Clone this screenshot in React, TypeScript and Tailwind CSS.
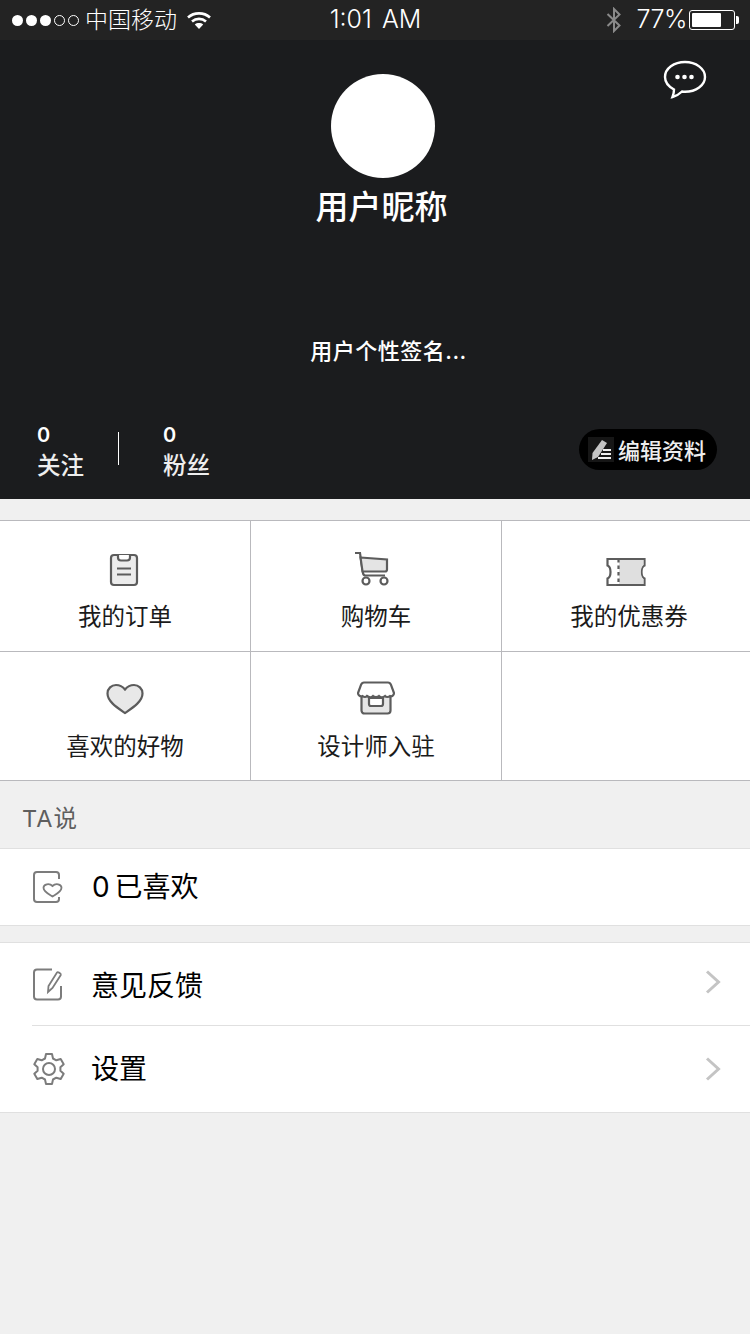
import React from "react";

const CJK = { fontFamily: '"Helvetica Neue", Inter, "Noto Sans CJK SC", sans-serif' };

function Signal() {
  return (
    <div className="flex items-center gap-[3px]">
      {[0, 1, 2].map((i) => (
        <span key={i} className="block w-[11px] h-[11px] rounded-full bg-white" />
      ))}
      {[0, 1].map((i) => (
        <span key={i} className="block w-[11px] h-[11px] rounded-full border border-white" />
      ))}
    </div>
  );
}

function Wifi() {
  return (
    <svg width="26" height="20" viewBox="0 0 26 20" fill="none" stroke="#fff" strokeWidth="2.6">
      <path d="M2 7.5C8 2 18 2 24 7.5" />
      <path d="M6 11.5C10 8 16 8 20 11.5" />
      <path d="M13 19l-4.2-4.6c2.3-1.8 6.1-1.8 8.4 0z" fill="#fff" stroke="none" />
    </svg>
  );
}

function Bluetooth() {
  return (
    <svg width="16" height="26" viewBox="0 0 16 26" fill="none" stroke="#8a8a8a" strokeWidth="2">
      <path d="M1.5 7l12 11.5L8 24V2l5.500 5.500L1.500 19" />
    </svg>
  );
}

function Battery() {
  return (
    <div className="flex items-center gap-[1px] ml-[2px]">
      <div className="w-[46px] h-[20px] rounded-[3px] border border-white p-[2px] flex">
        <div className="w-[29px] bg-white rounded-[1px]" />
      </div>
      <div className="w-[3px] h-[8px] bg-white rounded-r-[2px]" />
    </div>
  );
}

function Clipboard() {
  return (
    <svg className="-ml-[3px]" width="30" height="34" viewBox="0 0 30 34" fill="none" stroke="#5c5c5c" strokeWidth="2.2">
      <rect x="2" y="2" width="26" height="30" rx="3" fill="#ececec" />
      <path d="M9 2v2.500c0 2 1 3 3 3h6c2 0 3-1 3-3V2" fill="#fff" />
      <path d="M8 15.500h14M8 21.500h14" strokeWidth="2.200" />
    </svg>
  );
}

function Cart() {
  return (
    <svg className="-ml-[9px]" width="36" height="36" viewBox="0 0 36 36" fill="none" stroke="#5c5c5c" strokeWidth="2.2">
      <path d="M1 2h5l3 20c.2 1.500 1 2.500 2.500 2.500H31" />
      <path d="M6.500 6.500L33 8.500v10c0 1.300-.8 2-2 2H8.500z" fill="#e4e4e4" />
      <circle cx="12" cy="30" r="3.500" fill="#fff" />
      <circle cx="30" cy="30" r="3.500" fill="#fff" />
    </svg>
  );
}

function Coupon() {
  return (
    <svg width="40" height="30" viewBox="0 0 40 30" fill="none" stroke="#5c5c5c" strokeWidth="2.2">
      <path d="M1.500 2h37v6.500c-4 1.500-4 11.500 0 13V28h-37v-6.500c4-1.500 4-11.500 0-13z" fill="#fff" />
      <path d="M13 3h24.500v5c-3.500 2.500-3.500 11.500 0 14v5H13z" fill="#dfdfdf" stroke="none" />
      <path d="M12.500 2v26" strokeDasharray="3.500 3" />
      <path d="M1.500 2h37M1.500 28h37" />
    </svg>
  );
}

function Heart() {
  return (
    <svg className="-ml-[1px]" width="38" height="32" viewBox="0 0 38 32" fill="#e8e8e8" stroke="#5c5c5c" strokeWidth="2.2">
      <path d="M19 30C11 24.500 1.500 18.500 1.500 10.500 1.500 5.500 5.500 2 10 2c4 0 7 2 9 4.500C21 4 24 2 28 2c4.500 0 8.500 3.500 8.500 8.500C36.500 18.500 27 24.500 19 30z" />
    </svg>
  );
}

function Shop() {
  return (
    <svg width="38" height="34" viewBox="0 0 38 34" fill="none" stroke="#5c5c5c" strokeWidth="2.2">
      <rect x="4.500" y="14" width="29" height="18.500" rx="3" fill="#e6e6e6" />
      <path d="M12 17h14v6c0 1-.7 2-2 2H14c-1.300 0-2-1-2-2z" fill="#fff" />
      <path d="M7 1.500h24c1.500 0 2.500 1 3 2.300L37 12c0 2-2 4-4 3-1.500 1.300-4 1.300-5 0-1.800 1.500-4.500 1.500-6 0-1.500 1.500-4.500 1.500-6 0-1.500 1.500-4 1.500-6 0-1 1.300-3 1.300-4.500 0C3 16 1 14 1 12l3-8.200C4.500 2.500 5.500 1.500 7 1.500z" fill="#fff" />
    </svg>
  );
}

function BookHeart() {
  return (
    <svg width="31" height="34" viewBox="0 0 31 34" fill="none" stroke="#7c7c7c" strokeWidth="2">
      <path d="M27 9V5c0-2-1-3-3-3H5C3 2 2 3 2 5v24c0 2 1 3 3 3h19c2 0 3-1 3-3v-2" />
      <path d="M20.500 26.500c-3-2-9-4.500-9-8.700 0-3.800 6-4.800 9-1.800 3-3 9-2 9 1.800 0 4.200-6 6.700-9 8.700z" strokeWidth="1.800" />
    </svg>
  );
}

function Feedback() {
  return (
    <svg width="32" height="34" viewBox="0 0 32 34" fill="none" stroke="#7c7c7c" strokeWidth="2">
      <path d="M20 2.500H5c-2 0-3 1-3 3v24c0 2 1 3 3 3h21c2 0 3-1 3-3V19" />
      <path d="M16 25l.5-6L25 5.500c.8-1 4.500 1.200 3.800 2.500L20.500 21z" strokeWidth="1.800" />
    </svg>
  );
}

function Gear() {
  return (
    <svg width="34" height="34" viewBox="0 0 34 34" fill="none" stroke="#7c7c7c" strokeWidth="2">
      <path d="M14 2h6l1 4.500 3.300 1.800L28.700 7l3 5.200-3.300 3.100v3.400l3.300 3.100-3 5.200-4.400-1.300L21 27.500 20 32h-6l-1-4.500-3.300-1.800L5.300 27l-3-5.200 3.300-3.100v-3.400L2.300 12.200l3-5.200 4.400 1.300L13 6.500z" strokeLinejoin="round" />
      <circle cx="17" cy="17" r="6" />
    </svg>
  );
}

function Chevron({ className }: { className?: string }) {
  return (
    <svg className={className} width="16" height="24" viewBox="0 0 16 24" fill="none" stroke="#c4c4c4" strokeWidth="3">
      <path d="M2 1.500l11.500 10.500L2 22.500" />
    </svg>
  );
}

function Row1Cell({ icon, label, className, labelClass }: { icon: React.ReactNode; label: string; className: string; labelClass?: string }) {
  return (
    <div className={`flex flex-col items-center h-[130px] ${className}`}>
      <div className="h-[66px] flex items-end justify-center">{icon}</div>
      <div className={`mt-[13px] text-[23.500px] leading-[34px] text-[#1b1b1b] ${labelClass ?? ""}`}>{label}</div>
    </div>
  );
}

function Row2Cell({ icon, label, className }: { icon: React.ReactNode; label: string; className: string }) {
  return (
    <div className={`flex flex-col items-center h-[128px] ${className}`}>
      <div className="h-[63px] flex items-end justify-center">{icon}</div>
      <div className="mt-[15px] text-[23.500px] leading-[34px] text-[#1b1b1b]">{label}</div>
    </div>
  );
}

export default function App() {
  return (
    <div className="w-[750px] h-[1334px] bg-[#f0f0f0] flex flex-col overflow-hidden" style={CJK}>
      <div className="h-[40px] bg-[#232323] shrink-0 flex items-center text-white px-[12px] text-[23px]">
        <div className="flex-1 flex items-center">
          <Signal />
          <span className="ml-[6px] font-light">中国移动</span>
          <span className="ml-[9px]"><Wifi /></span>
        </div>
        <span className="font-light text-[25px] w-[92px] text-center whitespace-nowrap [word-spacing:3px]">1:01 AM</span>
        <div className="flex-1 flex items-center justify-end -mr-[1px]">
          <Bluetooth />
          <span className="ml-[15px] font-light text-[25px] tracking-[-0.500px]">77%</span>
          <Battery />
        </div>
      </div>

      <div className="h-[459px] bg-[#1b1c1e] shrink-0 flex flex-col relative text-white">
        <svg className="absolute right-[43px] top-[20px]" width="44" height="40" viewBox="0 0 44 40" fill="none" stroke="#fff" strokeWidth="2.400">
          <path d="M22 2C11 2 2 8.500 2 17c0 5.500 3.500 9.500 9 12.500 0 2.500-.5 5-1.500 7.500 4-1 7-3 9.500-5.500 1 .2 2 .3 3 .3 11 0 20-6.500 20-14.800S33 2 22 2z" />
          <circle cx="14.500" cy="17" r="2.300" fill="#fff" stroke="none" />
          <circle cx="21.500" cy="17" r="2.300" fill="#fff" stroke="none" />
          <circle cx="28.500" cy="17" r="2.300" fill="#fff" stroke="none" />
        </svg>
        <div className="flex flex-col items-center">
          <div className="w-[104px] h-[104px] rounded-full bg-white mt-[34px] ml-[16px]" />
          <div className="mt-[6px] text-[33px] leading-[46px] font-medium ml-[13px]">用户昵称</div>
          <div className="mt-[106px] text-[22px] leading-[30px] font-medium ml-[27px] tracking-[0.500px]">用户个性签名...</div>
        </div>
        <div className="flex items-center mt-[55px] pl-[37px] pr-[33px]">
          <div className="flex flex-col w-[81px]">
            <span className="text-[20px] leading-[28px] font-semibold">0</span>
            <span className="text-[23.500px] leading-[34px] font-medium text-[#eeeeee]">关注</span>
          </div>
          <div className="w-[1px] h-[33px] bg-white -mt-[8px]" />
          <div className="flex flex-col ml-[44px]">
            <span className="text-[20px] leading-[28px] font-semibold">0</span>
            <span className="text-[23.500px] leading-[34px] font-medium text-[#eeeeee]">粉丝</span>
          </div>
          <div className="ml-auto -mt-[5px] w-[138px] h-[41px] rounded-full bg-black flex items-center pl-[9px]">
            <svg width="26" height="25" viewBox="0 0 26 25">
              <rect width="26" height="25" fill="#161616" />
              <path d="M14 3l5 3-9 14-6 3 .5-7z" fill="#c4c4c4" />
              <path d="M15 12h8v2h-8zM13 16h10v2H13zM10 20h13v2H10z" fill="#eeeeee" />
            </svg>
            <span className="ml-[4px] mt-[3px] text-[22px] font-medium text-[#eeeeee] whitespace-nowrap">编辑资料</span>
          </div>
        </div>
      </div>

      <div className="h-[21px] shrink-0" />

      <div className="bg-white border-y border-[#b9b9bd] shrink-0">
        <div className="flex border-b border-[#b9b9bd]">
          <Row1Cell className="w-[251px] border-r border-[#b9b9bd]" icon={<Clipboard />} label="我的订单" />
          <Row1Cell className="w-[251px] border-r border-[#b9b9bd]" icon={<Cart />} label="购物车" />
          <Row1Cell className="w-[248px]" icon={<Coupon />} label="我的优惠券" labelClass="ml-[6px]" />
        </div>
        <div className="flex">
          <Row2Cell className="w-[251px] border-r border-[#b9b9bd]" icon={<Heart />} label="喜欢的好物" />
          <Row2Cell className="w-[251px] border-r border-[#b9b9bd]" icon={<Shop />} label="设计师入驻" />
          <div className="w-[248px] h-[128px]" />
        </div>
      </div>

      <div className="h-[67px] shrink-0 flex items-center pl-[22px] pt-[8px] text-[23.500px] tracking-[1px] text-[#5e5e5e]">TA说</div>

      <div className="h-[78px] bg-white border-y border-[#e0e0e0] shrink-0 flex items-center pl-[32px] text-[28px] text-black">
        <BookHeart />
        <span className="ml-[29px] font-normal [word-spacing:-3px]">0 已喜欢</span>
      </div>

      <div className="h-[16px] shrink-0" />

      <div className="bg-white border-y border-[#e0e0e0] shrink-0 pl-[32px]">
        <div className="h-[83px] flex items-center border-b border-[#e0e0e0] pr-[29px]">
          <Feedback />
          <span className="ml-[27px] mt-[4px] text-[28px] text-black flex-1">意见反馈</span>
          <Chevron className="-mt-[5px]" />
        </div>
        <div className="h-[86px] flex items-center pr-[29px]">
          <Gear />
          <span className="ml-[25px] text-[28px] text-black flex-1">设置</span>
          <Chevron />
        </div>
      </div>
    </div>
  );
}
